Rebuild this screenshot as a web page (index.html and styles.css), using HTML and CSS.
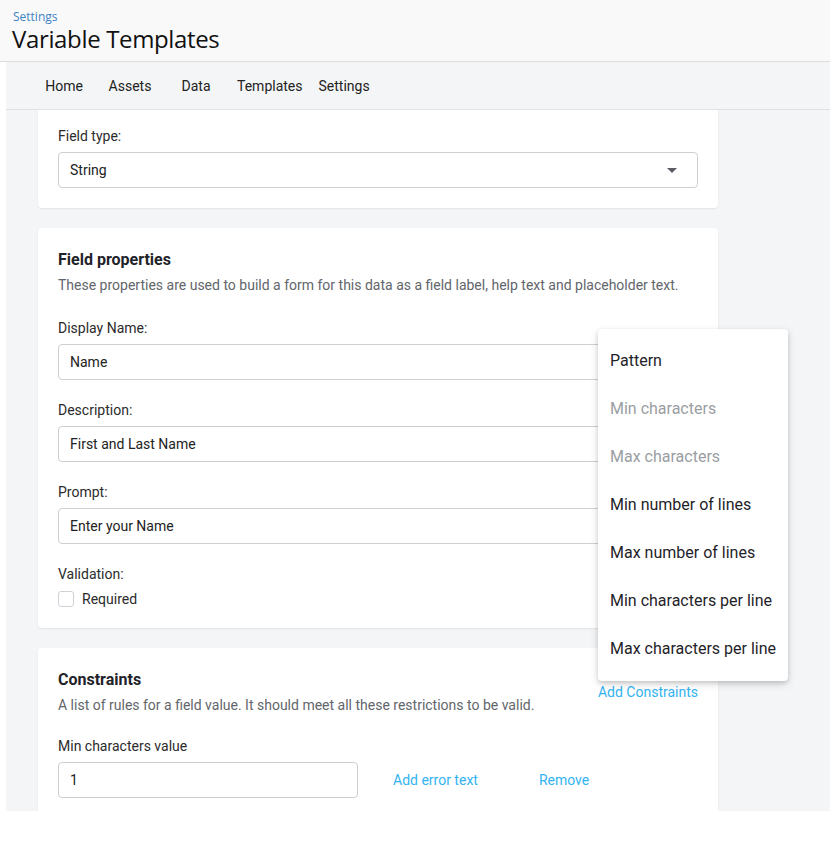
FILE: index.html
```html
<!DOCTYPE html>
<html>
<head>
<meta charset="utf-8">
<link rel="stylesheet" href="styles.css">
</head>
<body>
<header class="page-header">
  <a class="crumb">Settings</a>
  <h1 class="title">Variable Templates</h1>
</header>
<div class="shell">
  <nav class="nav">
    <span class="nav-item">Home</span>
    <span class="nav-item">Assets</span>
    <span class="nav-item">Data</span>
    <span class="nav-item">Templates</span>
    <span class="nav-item">Settings</span>
  </nav>
  <main class="main">
    <section class="card card-first">
      <div class="label">Field type:</div>
      <div class="select">
        <span>String</span>
        <svg class="caret" width="10" height="5" viewBox="0 0 10 5"><path d="M0 0h10L5 5z" fill="#5a5e63"/></svg>
      </div>
    </section>

    <section class="card">
      <h2 class="card-title">Field properties</h2>
      <p class="card-desc">These properties are used to build a form for this data as a field label, help text and placeholder text.</p>
      <div class="field">
        <div class="label">Display Name:</div>
        <div class="input">Name</div>
      </div>
      <div class="field">
        <div class="label">Description:</div>
        <div class="input">First and Last Name</div>
      </div>
      <div class="field">
        <div class="label">Prompt:</div>
        <div class="input">Enter your Name</div>
      </div>
      <div class="field">
        <div class="label">Validation:</div>
        <label class="check"><span class="box"></span>Required</label>
      </div>
    </section>

    <section class="card">
      <div class="card-head">
        <div>
          <h2 class="card-title">Constraints</h2>
          <p class="card-desc">A list of rules for a field value. It should meet all these restrictions to be valid.</p>
        </div>
        <a class="link">Add Constraints</a>
      </div>
      <div class="field">
        <div class="label">Min characters value</div>
        <div class="row">
          <div class="input input-short">1</div>
          <a class="link link-error">Add error text</a>
          <a class="link link-remove">Remove</a>
        </div>
      </div>
    </section>
  </main>
</div>

<ul class="menu">
  <li class="menu-item">Pattern</li>
  <li class="menu-item disabled">Min characters</li>
  <li class="menu-item disabled">Max characters</li>
  <li class="menu-item">Min number of lines</li>
  <li class="menu-item">Max number of lines</li>
  <li class="menu-item">Min characters per line</li>
  <li class="menu-item">Max characters per line</li>
</ul>
</body>
</html>
```

FILE: styles.css
```css
* { box-sizing: border-box; }
html, body { margin: 0; padding: 0; background: #fff; }
body {
  font-family: Roboto, "Liberation Sans", sans-serif;
  color: #222;
  width: 830px;
  height: 851px;
  overflow: hidden;
  position: relative;
}

.page-header {
  background: #f9f9f9;
  border-bottom: 1px solid #dcdcdc;
  height: 62px;
  padding: 10px 12px 0 12px;
}
.crumb {
  display: block;
  font-family: "Open Sans", sans-serif;
  font-size: 12px;
  line-height: 14px;
  color: #3d82c4;
  padding-left: 1px;
}
.title {
  margin: 1px 0 0 0;
  font-family: "Open Sans", sans-serif;
  font-weight: 400;
  font-size: 24px;
  line-height: 28px;
  color: #111;
  letter-spacing: -0.35px;
}

.shell {
  margin-left: 6px;
  background: #f4f5f7;
}
.nav {
  height: 48px;
  border-bottom: 1px solid #dfe1e4;
  display: flex;
  align-items: center;
  padding-left: 25px;
  font-size: 14px;
  color: #222;
}
.nav-item {
  min-width: 66px;
  padding: 0 8px;
  text-align: center;
}

.main {
  height: 701px;
  overflow: hidden;
  padding: 0 112px 0 32px;
  display: flex;
  flex-direction: column;
  gap: 20px;
}
.card {
  background: #fff;
  border-radius: 4px;
  box-shadow: 0 1px 2px rgba(0,0,0,0.08);
  padding: 20px 20px 19px 20px;
  flex-shrink: 0;
}
.card-first {
  border-radius: 0 0 4px 4px;
  padding-top: 16px;
  padding-bottom: 20px;
}

.label {
  font-size: 14px;
  line-height: 20px;
  color: #2b2b2b;
  margin-bottom: 6px;
}

.select, .input {
  height: 36px;
  border: 1px solid #cfcfcf;
  border-radius: 4px;
  display: flex;
  align-items: center;
  padding: 0 12px 0 11px;
  font-size: 14px;
  color: #222;
  background: #fff;
}
.select { justify-content: space-between; padding-right: 20px; }

.card-title {
  margin: 0;
  font-size: 16px;
  font-weight: 700;
  line-height: 22px;
  color: #1f2329;
  padding-top: 1px;
}
.card-desc {
  margin: 4px 0 0 0;
  font-size: 14px;
  line-height: 20px;
  color: #62666b;
}
.field { margin-top: 20px; }
.card-desc + .field { margin-top: 23px; }

.check {
  display: flex;
  align-items: center;
  font-size: 14px;
  line-height: 20px;
  color: #2b2b2b;
  margin-top: -1px;
}
.box {
  width: 16px;
  height: 16px;
  border: 1px solid #cfd3d8;
  border-radius: 3px;
  margin-right: 8px;
  background: #fff;
}

.card-head {
  display: flex;
  align-items: center;
  justify-content: space-between;
}
.card-head + .field { margin-top: 21px; }
.link {
  color: #33b3f2;
  font-size: 14px;
  line-height: 20px;
  cursor: pointer;
}
.row {
  display: flex;
  align-items: center;
}
.input-short { width: 300px; }
.link-error { margin-left: 35px; }
.link-remove { margin-left: 61px; }

.menu {
  position: absolute;
  left: 598px;
  top: 329px;
  width: 190px;
  margin: 0;
  padding: 7px 0 9px 0;
  list-style: none;
  background: #fff;
  border-radius: 4px;
  box-shadow: 0 2px 4px rgba(0,0,0,0.14), 0 3px 10px rgba(0,0,0,0.12);
}
.menu-item {
  height: 48px;
  display: flex;
  align-items: center;
  padding-left: 12px;
  font-size: 16px;
  color: #1f2329;
  white-space: nowrap;
}
.menu-item.disabled { color: #9a9ea3; }
```
